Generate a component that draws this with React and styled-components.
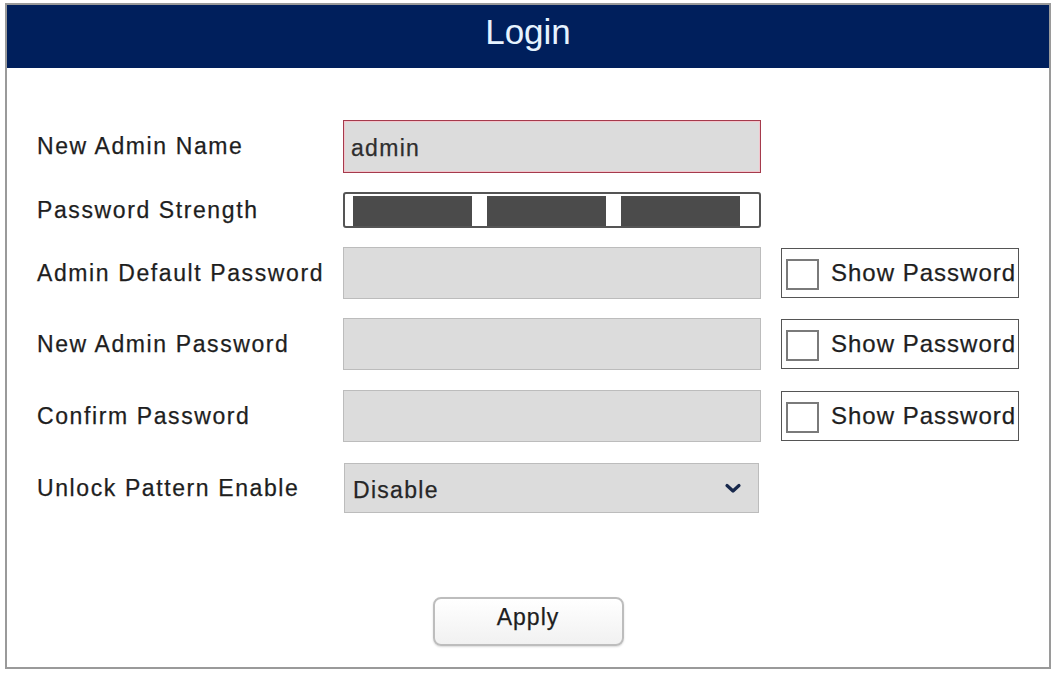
import styled, { createGlobalStyle } from 'styled-components'

const GlobalStyle = createGlobalStyle`
  html, body {
    margin: 0;
    padding: 0;
    background: #ffffff;
  }
  * {
    box-sizing: border-box;
  }
`

const Frame = styled.div`
  width: 1046px;
  height: 666px;
  margin: 3px 0 0 5px;
  border: 2px solid #9a9a9a;
  display: flex;
  flex-direction: column;
  background: #ffffff;
  font-family: 'Liberation Sans', Arial, sans-serif;
`

const Header = styled.div`
  height: 63px;
  background: #001f5c;
  display: flex;
  align-items: center;
  justify-content: center;
`

const Title = styled.div`
  font-size: 35px;
  color: #e6f3ff;
  padding-bottom: 9px;
`

const Body = styled.div`
  flex: 1;
  display: flex;
  flex-direction: column;
  padding: 52px 0 0 30px;
`

const Form = styled.div`
  display: flex;
  flex-direction: column;
  gap: 19px;
`

const Row = styled.div`
  display: flex;
  align-items: center;
  height: ${(props) => props.h || 52}px;
  margin-top: ${(props) => props.mt || 0}px;
`

const Label = styled.div`
  width: 306px;
  font-size: 23px;
  letter-spacing: 1.6px;
  color: #1e1e1e;
  -webkit-text-stroke: 0.25px #1e1e1e;
`

const Input = styled.div`
  width: 418px;
  height: 100%;
  background: #dcdcdc;
  border: 1px solid ${(props) => (props.active ? '#a53a4c' : '#bcbcbc')};
  box-shadow: ${(props) => (props.active ? 'inset 0 0 0 1px #f2c6cd' : 'none')};
  display: flex;
  align-items: center;
  padding: 3px 0 0 7px;
  font-size: 23px;
  letter-spacing: 1.3px;
  color: #2e2e2e;
  -webkit-text-stroke: 0.25px #2e2e2e;
`

const Strength = styled.div`
  width: 418px;
  height: 36px;
  border: 2px solid #555555;
  border-radius: 3px;
  display: flex;
  gap: 15px;
  padding: 2px 0 0 8px;
  background: #ffffff;
`

const Segment = styled.div`
  width: 119px;
  background: #4b4b4b;
`

const Select = styled.div`
  width: 415px;
  height: 100%;
  margin-left: 1px;
  background: #dcdcdc;
  border: 1px solid #bcbcbc;
  display: flex;
  align-items: center;
  justify-content: space-between;
  padding: 4px 16px 0 8px;
  font-size: 23px;
  letter-spacing: 1.3px;
  color: #262626;
  -webkit-text-stroke: 0.25px #262626;
`

const Chevron = styled.svg`
  width: 18px;
  height: 11px;
  margin-top: -3px;
`

const ShowBox = styled.label`
  margin-left: 20px;
  width: 238px;
  height: 50px;
  border: 1px solid #555555;
  display: flex;
  align-items: center;
  padding-left: 4px;
  gap: 12px;
  font-size: 24px;
  letter-spacing: 1px;
  color: #1e1e1e;
  -webkit-text-stroke: 0.25px #1e1e1e;
`

const Check = styled.span`
  width: 33px;
  height: 31px;
  border: 2px solid #7a7a7a;
  background: #ffffff;
  margin-top: 2px;
`

const Footer = styled.div`
  margin-top: auto;
  display: flex;
  justify-content: center;
  padding: 0 30px 21px 0;
`

const ApplyButton = styled.button`
  width: 191px;
  height: 49px;
  border: 2px solid #bdbdbd;
  border-radius: 8px;
  background: linear-gradient(#ffffff, #f1f1f1);
  box-shadow: 0 1px 2px rgba(0, 0, 0, 0.15);
  font-family: 'Liberation Sans', Arial, sans-serif;
  font-size: 23px;
  letter-spacing: 1px;
  color: #1e1e1e;
  -webkit-text-stroke: 0.25px #1e1e1e;
  padding: 0 0 8px;
`

const ShowPassword = () => (
  <ShowBox>
    <Check />
    Show Password
  </ShowBox>
)

const App = () => {
  return (
    <>
      <GlobalStyle />
      <Frame>
        <Header>
          <Title>Login</Title>
        </Header>
        <Body>
          <Form>
            <Row h={53}>
              <Label>New Admin Name</Label>
              <Input active>admin</Input>
            </Row>
            <Row h={36}>
              <Label>Password Strength</Label>
              <Strength>
                <Segment />
                <Segment />
                <Segment />
              </Strength>
            </Row>
            <Row>
              <Label>Admin Default Password</Label>
              <Input />
              <ShowPassword />
            </Row>
            <Row>
              <Label>New Admin Password</Label>
              <Input />
              <ShowPassword />
            </Row>
            <Row mt={1}>
              <Label>Confirm Password</Label>
              <Input />
              <ShowPassword />
            </Row>
            <Row h={50} mt={2}>
              <Label>Unlock Pattern Enable</Label>
              <Select>
                Disable
                <Chevron viewBox="0 0 18 11">
                  <path d="M3 2.5 L9 8 L15 2.5" fill="none" stroke="#17284c" strokeWidth="3.2" strokeLinecap="round" strokeLinejoin="round" />
                </Chevron>
              </Select>
            </Row>
          </Form>
          <Footer>
            <ApplyButton>Apply</ApplyButton>
          </Footer>
        </Body>
      </Frame>
    </>
  )
}

export default App
